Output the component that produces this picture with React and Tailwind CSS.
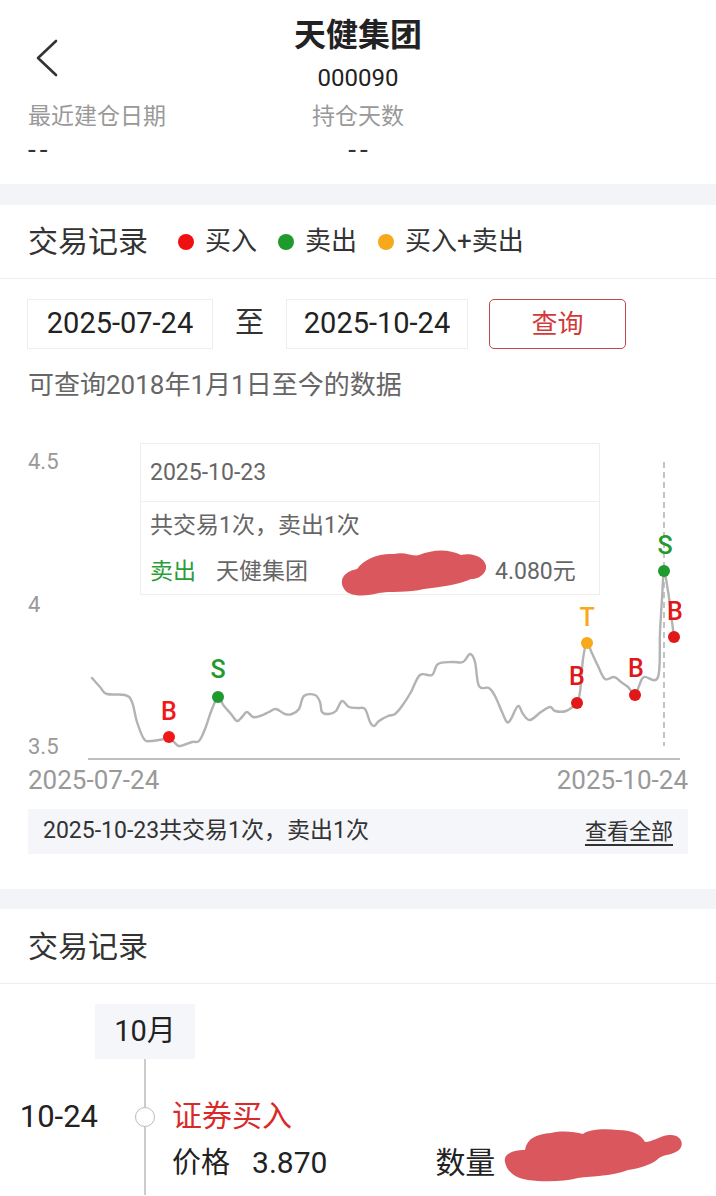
import React from "react";

const PTS = [[92,679],[100,688],[107,695],[125,696],[132,703],[137,723],[144,740],[151,742],[169,740],[176,745],[180,747],[192,743],[199,742],[205,730],[212,710],[218,699],[224,707],[231,715],[237,722],[242,718],[247,713],[253,718],[260,717],[269,713],[276,710],[285,715],[292,715],[299,710],[304,697],[315,696],[320,703],[322,713],[329,715],[336,712],[342,702],[349,708],[358,709],[365,710],[370,723],[374,727],[379,722],[388,717],[395,715],[402,707],[411,693],[420,676],[432,676],[438,665],[452,663],[463,663],[470,655],[475,663],[479,687],[489,689],[495,697],[502,713],[507,723],[511,720],[518,707],[523,715],[530,721],[541,713],[550,708],[555,712],[566,712],[576,704],[580,693],[583,660],[587,643],[591,652],[598,667],[605,680],[614,678],[621,683],[628,688],[635,696],[639,687],[644,678],[658,678],[660,633],[662,600],[664,573],[668,592],[671,615],[674,638]];

const OY = 420;

function smoothPath(pts) {
  const p = pts.map(([x, y]) => [x, y - OY]);
  let d = `M${p[0][0]},${p[0][1]}`;
  for (let i = 0; i < p.length - 1; i++) {
    const p0 = p[i - 1] || p[i];
    const p1 = p[i];
    const p2 = p[i + 1];
    const p3 = p[i + 2] || p2;
    const t = 0.18;
    const c1x = p1[0] + (p2[0] - p0[0]) * t;
    const c1y = p1[1] + (p2[1] - p0[1]) * t;
    const c2x = p2[0] - (p3[0] - p1[0]) * t;
    const c2y = p2[1] - (p3[1] - p1[1]) * t;
    d += ` C${c1x.toFixed(1)},${c1y.toFixed(1)} ${c2x.toFixed(1)},${c2y.toFixed(1)} ${p2[0]},${p2[1]}`;
  }
  return d;
}

const RED = "#f01818";
const GREEN = "#1f9a2e";
const ORANGE = "#f7a81b";

const MARKERS = [
  { x: 169, y: 738, lx: 169, ly: 712, c: RED, t: "B" },
  { x: 218, y: 698, lx: 218, ly: 670, c: GREEN, t: "S" },
  { x: 577, y: 704, lx: 577, ly: 677, c: "#e01818", t: "B" },
  { x: 587, y: 644, lx: 587, ly: 618, c: ORANGE, t: "T" },
  { x: 635, y: 696, lx: 636, ly: 669, c: "#e01818", t: "B" },
  { x: 664, y: 572, lx: 665, ly: 546, c: GREEN, t: "S" },
  { x: 674, y: 638, lx: 675, ly: 612, c: "#e01818", t: "B" },
];

function Blot({ w, h, d }) {
  return (
    <svg width={w} height={h} viewBox={`0 0 ${w} ${h}`} className="block">
      <path d={d} fill="#d9575d" />
    </svg>
  );
}

const BLOT1 =
  "M4,38 C0,28 8,22 18,20 C25,10 40,4 55,5 C65,2 75,8 80,6 C95,0 110,0 122,6 C130,4 142,6 146,14 C150,22 142,30 132,30 C120,36 100,38 85,40 C70,44 50,42 40,44 C25,48 8,48 4,38 Z";
const BLOT2 =
  "M2,34 C0,26 10,22 22,22 C24,10 34,6 48,5 C60,2 72,4 80,6 C84,2 100,0 115,2 C128,2 138,6 142,14 C150,14 156,8 166,7 C178,6 182,16 176,22 C170,27 162,26 156,30 C150,36 138,40 125,42 C110,48 90,48 75,50 C60,54 40,54 25,52 C12,50 4,44 2,34 Z";

function Chart() {
  const d = smoothPath(PTS);
  return (
    <div className="relative mt-[20px] h-[380px]">
      <svg width="716" height="380" viewBox="0 0 716 380" className="block">
        <text x="28" y="42" fontSize="22" fill="#999999" dominantBaseline="central">4.5</text>
        <text x="28" y="185" fontSize="22" fill="#999999" dominantBaseline="central">4</text>
        <text x="28" y="327" fontSize="22" fill="#999999" dominantBaseline="central">3.5</text>
        <line x1="88" y1="340" x2="680" y2="340" stroke="#a8a8a8" strokeWidth="1.5" />
        <line x1="664" y1="43" x2="664" y2="327" stroke="#b0b0b0" strokeWidth="1.5" strokeDasharray="6 4" />
        <path d={d} fill="none" stroke="#b3b3b3" strokeWidth="2.4" strokeLinejoin="round" strokeLinecap="round" />
        {MARKERS.map((m, i) => (
          <g key={i}>
            <circle cx={m.x} cy={m.y - OY} r="6" fill={m.c} />
            <text
              x={m.lx}
              y={m.ly - OY}
              fontSize="25"
              fontWeight="500"
              fill={m.c}
              textAnchor="middle"
              dominantBaseline="central"
            >
              {m.t}
            </text>
          </g>
        ))}
        <text x="28" y="361" fontSize="26" fill="#999999" dominantBaseline="central">2025-07-24</text>
        <text x="688" y="361" fontSize="26" fill="#999999" textAnchor="end" dominantBaseline="central">2025-10-24</text>
      </svg>
      <div className="absolute left-[140px] top-[24px] flex h-[152px] w-[460px] flex-col border border-[#eeeeee] bg-white/95 text-[23px] text-[#666666]">
        <div className="flex h-[59px] items-center border-b border-[#eeeeee] px-[9px] leading-none">2025-10-23</div>
        <div className="flex h-[46px] items-center px-[9px] leading-none">共交易1次，卖出1次</div>
        <div className="flex h-[46px] items-center px-[9px] leading-none">
          <span className="text-[#2a9d3a]">卖出</span>
          <span className="ml-[20px]">天健集团</span>
          <span className="ml-[31px] mt-[4px]">
            <Blot w={150} h={48} d={BLOT1} />
          </span>
          <span className="ml-[6px]">4.080元</span>
        </div>
      </div>
    </div>
  );
}

export default function App() {
  return (
    <div className="w-[716px] bg-white font-['Roboto','Noto_Sans_CJK_SC',sans-serif] text-[#333333]">
      {/* Header */}
      <div className="pb-[19px]">
        <div className="grid grid-cols-[1fr_auto_1fr] pt-[14px]">
          <div className="pl-[35px] pt-[25px]">
            <svg width="24" height="38" viewBox="0 0 24 38">
              <polyline points="21,2 3,19 21,36" fill="none" stroke="#333333" strokeWidth="2.6" strokeLinecap="round" strokeLinejoin="round" />
            </svg>
          </div>
          <div className="flex flex-col items-center">
            <div className="text-[32px] font-bold leading-[42px] text-[#222222]">天健集团</div>
            <div className="mt-[7px] text-[24px] leading-[30px] text-[#222222]">000090</div>
          </div>
          <div />
        </div>
        <div className="flex px-[28px]">
          <div className="flex w-[284px] flex-col">
            <div className="mt-[9px] text-[23px] leading-[30px] text-[#999999]">最近建仓日期</div>
            <div className="mt-[3px] text-[28px] leading-[30px] tracking-[4px] text-[#333333]">--</div>
          </div>
          <div className="flex flex-col items-center">
            <div className="mt-[9px] text-[23px] leading-[30px] text-[#999999]">持仓天数</div>
            <div className="mt-[3px] pl-[4px] text-[28px] leading-[30px] tracking-[4px] text-[#333333]">--</div>
          </div>
        </div>
      </div>

      <div className="h-[21px] bg-[#f3f4f8]" />

      {/* Legend */}
      <div className="flex h-[74px] items-center border-b border-[#eeeeee] px-[28px]">
        <span className="text-[30px] text-[#333333]">交易记录</span>
        <span className="ml-[30px] h-[16px] w-[16px] rounded-full bg-[#f01010]" />
        <span className="ml-[11px] text-[26px]">买入</span>
        <span className="ml-[21px] h-[16px] w-[16px] rounded-full bg-[#1f9a2e]" />
        <span className="ml-[11px] text-[26px]">卖出</span>
        <span className="ml-[21px] h-[16px] w-[16px] rounded-full bg-[#f7a81b]" />
        <span className="ml-[11px] text-[26px]">买入+卖出</span>
      </div>

      {/* Date query */}
      <div className="mt-[20px] flex h-[50px] items-center px-[27px]">
        <div className="flex h-[50px] w-[186px] items-center justify-center border border-[#eeeeee] text-[29px] text-[#222222]">2025-07-24</div>
        <div className="mx-[22px] text-[29px] text-[#333333]">至</div>
        <div className="flex h-[50px] w-[182px] items-center justify-center border border-[#eeeeee] text-[29px] text-[#222222]">2025-10-24</div>
        <button className="ml-[21px] flex h-[50px] w-[137px] items-center justify-center rounded-[5px] border-[1.5px] border-[#c5484a] text-[26px] text-[#d23a3a]">查询</button>
      </div>
      <div className="mt-[22px] px-[28px] text-[26px] leading-[28px] text-[#666666]">可查询2018年1月1日至今的数据</div>

      <Chart />

      {/* Summary */}
      <div className="mx-[28px] mt-[10px] flex h-[45px] items-center justify-between bg-[#f5f6fa] px-[15px] text-[23px] text-[#333333]">
        <span>2025-10-23共交易1次，卖出1次</span>
        <span className="text-[22px] underline underline-offset-[5px]">查看全部</span>
      </div>

      <div className="mt-[35px] h-[20px] bg-[#f3f4f8]" />

      <div className="flex h-[75px] items-center border-b border-[#eeeeee] px-[28px] text-[30px] text-[#333333]">交易记录</div>

      {/* Timeline */}
      <div className="mt-[20px] ml-[95px] flex h-[55px] w-[100px] items-center justify-center bg-[#f5f6fa] text-[29px] text-[#222222]">10月</div>
      <div className="flex h-[136px]">
        <div className="w-[120px] pr-[22px] pt-[38px] text-right text-[31px] leading-[40px] text-[#222222]">10-24</div>
        <div className="flex w-[50px] flex-col items-center">
          <div className="h-[48px] w-[2px] bg-[#cccccc]" />
          <div className="h-[20px] w-[20px] rounded-full border-[1.5px] border-[#bbbbbb] bg-white" />
          <div className="w-[2px] flex-1 bg-[#cccccc]" />
        </div>
        <div className="pl-[2px] pt-[37px]">
          <div className="text-[30px] leading-[40px] text-[#d92a2a]">证券买入</div>
          <div className="mt-[6px] flex items-center leading-[40px] text-[#222222]">
            <span className="text-[29px]">价格</span>
            <span className="ml-[22px] text-[30px]">3.870</span>
            <span className="ml-[108px] text-[30px]">数量</span>
            <span className="ml-[8px] mt-[-14px]">
              <Blot w={182} h={56} d={BLOT2} />
            </span>
          </div>
        </div>
      </div>
    </div>
  );
}
